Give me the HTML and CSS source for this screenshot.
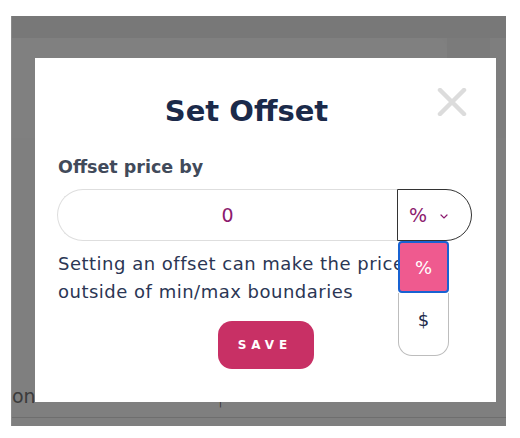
FILE: index.html
```html
<!DOCTYPE html>
<html lang="en">
<head>
<meta charset="utf-8">
<title>Set Offset</title>
<link rel="stylesheet" href="styles.css">
</head>
<body>
<div class="screen">
  <div class="topband"></div>
  <div class="page-row">
    <div class="card"></div>
    <div class="side"></div>
    <div class="edge"></div>
  </div>
  <div class="bottom-text"><span>on</span><span class="tick">|</span></div>
  <div class="rule"></div>

  <div class="modal" role="dialog" aria-labelledby="modal-title">
    <div class="modal-header">
      <h2 class="modal-title" id="modal-title">Set Offset</h2>
      <button class="close-btn" aria-label="Close">
        <svg width="30" height="28" viewBox="0 0 30 28"><path d="M3 2 L27 26 M27 2 L3 26" stroke="#dcdcdc" stroke-width="4.5" stroke-linecap="round" fill="none"/></svg>
      </button>
    </div>
    <div class="field-label">Offset price by</div>
    <div class="field">
      <div class="field-input">0</div>
      <div class="field-select">
        <span class="sel-value">%</span>
        <svg class="chev" width="8" height="5" viewBox="0 0 8 5"><path d="M1 1 L4 4 L7 1" stroke="#8c1a6e" stroke-width="1.2" fill="none" stroke-linecap="round"/></svg>
      </div>
      <div class="dropdown">
        <div class="dd-item dd-active">%</div>
        <div class="dd-item dd-plain">$</div>
      </div>
    </div>
    <p class="helper">Setting an offset can make the price outside of min/max boundaries</p>
    <div class="actions">
      <button class="save-btn">SAVE</button>
    </div>
  </div>
</div>
</body>
</html>
```

FILE: styles.css
```css
* { box-sizing: border-box; }
html, body { margin: 0; padding: 0; background: #ffffff; }
body { font-family: "DejaVu Sans", "Inter", sans-serif; }

.screen {
  position: relative;
  margin: 16px 14px 0 11px;
  width: 495px;
  height: 410px;
  background: #7f7f7f;
  border-left: 1px solid #8a8a8a;
  display: flex;
  flex-direction: column;
}
.topband { height: 22px; background: #787878; flex: none; }
.page-row { display: flex; height: 100px; flex: none; }
.card { width: 435px; background: #808080; border-top-right-radius: 10px; }
.side { flex: 1; background: #7b7b7b; }
.edge { width: 16px; background: #7e7e7e; }

.bottom-text {
  margin-top: auto;
  height: 22px;
  display: flex;
  align-items: flex-end;
  font-size: 19px;
  line-height: 22px;
  color: #3b3b3b;
}
.bottom-text .tick { margin-left: 183px; font-size: 10px; line-height: 10px; color: #333; }
.rule { height: 1px; background: #6e6e6e; margin-top: 10px; margin-bottom: 8px; flex: none; }

.modal {
  position: absolute;
  left: 23px;
  top: 42px;
  width: 461px;
  height: 344px;
  background: #ffffff;
  padding: 29px 24px 0 22px;
}
.modal-header { display: flex; align-items: flex-start; }
.modal-title {
  flex: 1;
  margin: 0;
  text-align: center;
  font-size: 29px;
  line-height: 40px;
  font-weight: 700;
  color: #1b2a4a;
  padding-top: 4px;
}
.close-btn {
  width: 36px;
  height: 36px;
  padding: 1px 0 0 1px;
  border: 0;
  background: none;
  display: flex;
  justify-content: flex-start;
}
.field-label {
  margin-top: 24px;
  padding-left: 1px;
  font-size: 17.5px;
  line-height: 24px;
  font-weight: 700;
  color: #414a5a;
}
.field {
  position: relative;
  display: flex;
  margin-top: 10px;
  height: 52px;
}
.field-input {
  flex: 1;
  border: 1px solid #dedede;
  border-right: 0;
  border-radius: 26px 0 0 26px;
  display: flex;
  align-items: center;
  justify-content: center;
  font-size: 19px;
  color: #8c1a6e;
}
.field-select {
  width: 75px;
  border: 1px solid #333;
  border-radius: 0 26px 26px 0;
  display: flex;
  align-items: center;
  padding-left: 11px;
  gap: 13px;
  color: #8c1a6e;
  font-size: 19px;
}
.chev { margin-top: 2px; }
.dropdown {
  position: absolute;
  left: 341px;
  top: 52px;
  width: 51px;
  display: flex;
  flex-direction: column;
  z-index: 2;
}
.dd-item {
  display: flex;
  align-items: center;
  justify-content: center;
  font-size: 18px;
}
.dd-active {
  height: 52px;
  background: #ef5a8f;
  color: #fff;
  border: 2px solid #1862d2;
  border-radius: 4px;
}
.dd-plain {
  height: 63px;
  background: #fff;
  color: #1b2a4a;
  border: 1px solid #bdbdbd;
  border-top: 0;
  border-radius: 0 0 14px 14px;
  padding-bottom: 10px;
}
.helper {
  margin: 9px 0 0 1px;
  max-width: 400px;
  font-size: 18px;
  line-height: 28px;
  letter-spacing: 0.5px;
  color: #2b3654;
}
.actions { display: flex; justify-content: center; margin-top: 15px; padding-left: 2px; }
.save-btn {
  width: 96px;
  height: 48px;
  border: 0;
  border-radius: 14px;
  background: #c83065;
  color: #fff;
  font-family: inherit;
  font-weight: 700;
  font-size: 12px;
  letter-spacing: 5px;
  padding-left: 5px;
}
```
